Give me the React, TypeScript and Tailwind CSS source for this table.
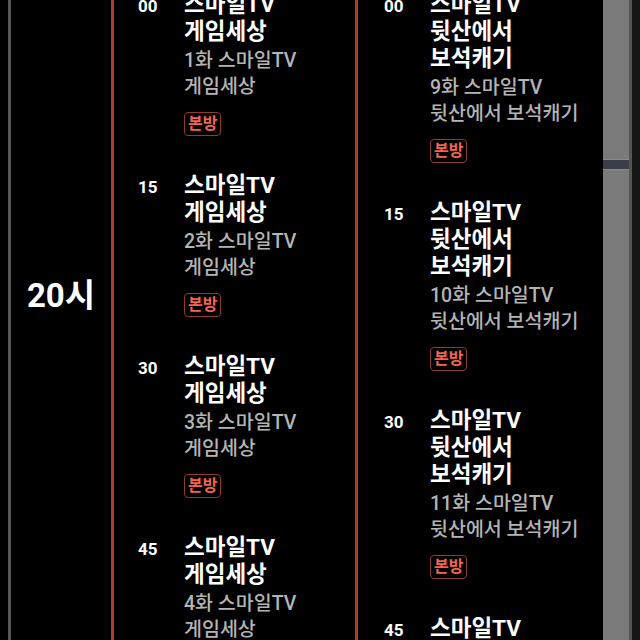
import React from "react";

type Slot = {
  time: string;
  title: string[];
  sub: string[];
};

const leftSlots: Slot[] = [
  { time: "00", title: ["스마일TV", "게임세상"], sub: ["1화 스마일TV", "게임세상"] },
  { time: "15", title: ["스마일TV", "게임세상"], sub: ["2화 스마일TV", "게임세상"] },
  { time: "30", title: ["스마일TV", "게임세상"], sub: ["3화 스마일TV", "게임세상"] },
  { time: "45", title: ["스마일TV", "게임세상"], sub: ["4화 스마일TV", "게임세상"] },
];

const rightSlots: Slot[] = [
  { time: "00", title: ["스마일TV", "뒷산에서", "보석캐기"], sub: ["9화 스마일TV", "뒷산에서 보석캐기"] },
  { time: "15", title: ["스마일TV", "뒷산에서", "보석캐기"], sub: ["10화 스마일TV", "뒷산에서 보석캐기"] },
  { time: "30", title: ["스마일TV", "뒷산에서", "보석캐기"], sub: ["11화 스마일TV", "뒷산에서 보석캐기"] },
  { time: "45", title: ["스마일TV", "뒷산에서", "보석캐기"], sub: ["12화 스마일TV", "뒷산에서 보석캐기"] },
];

const font = { fontFamily: 'Roboto, "Noto Sans CJK KR", sans-serif' };

const SlotRow: React.FC<{ slot: Slot }> = ({ slot }) => (
  <div className="flex items-baseline pb-[36px]">
    <span className="w-[46px] shrink-0 text-[17px] font-bold text-white">{slot.time}</span>
    <div className="flex flex-col">
      <div className="text-[22.5px] leading-[27px] font-bold text-white">
        {slot.title.map((line, i) => (
          <div key={i} className="whitespace-nowrap">
            {line}
          </div>
        ))}
      </div>
      <div className="mt-[3px] text-[19.5px] leading-[26px] font-medium text-[#b4b4b4]">
        {slot.sub.map((line, i) => (
          <div key={i} className="whitespace-nowrap">
            {line}
          </div>
        ))}
      </div>
      <div className="mt-[12px] flex">
        <span className="flex h-[24px] items-center rounded-[4px] border-[1.5px] border-[#8e3a2e] px-[3px] text-[16px] font-bold text-[#f2654f]">
          본방
        </span>
      </div>
    </div>
  </div>
);

const App: React.FC = () => {
  return (
    <div className="flex h-[640px] w-[640px] overflow-hidden bg-black" style={font}>
      <div className="w-[8px] shrink-0" />
      <div className="flex w-[103px] shrink-0 justify-center border-l-[3px] border-[#565656] pt-[276px]">
        <span className="text-[33px] leading-[40px] font-bold text-white">20시</span>
      </div>
      <div className="w-[244px] shrink-0 border-l-[3px] border-[#b8392a] pl-[24px]">
        <div className="-mt-[9px]">
          {leftSlots.map((s) => (
            <SlotRow key={s.time} slot={s} />
          ))}
        </div>
      </div>
      <div className="w-[248px] shrink-0 border-l-[3px] border-[#b8392a] pl-[26px]">
        <div className="-mt-[9px]">
          {rightSlots.map((s) => (
            <SlotRow key={s.time} slot={s} />
          ))}
        </div>
      </div>
      <div className="flex w-[26px] shrink-0 flex-col bg-[#7a7a7a]">
        <div className="h-[159px]" />
        <div className="h-[11px] border-y border-[#8a8a8a] bg-[#3a3e48]" />
      </div>
      <div className="w-[3px] shrink-0 bg-[#555555]" />
      <div className="flex-1 bg-[#161616]" />
    </div>
  );
};

export default App;
